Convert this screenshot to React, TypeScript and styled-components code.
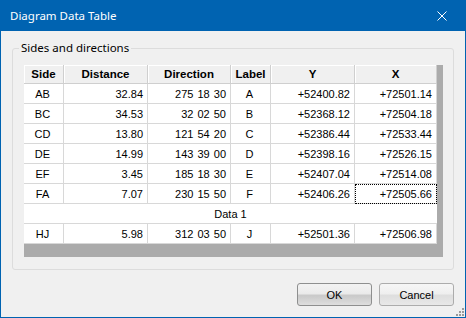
import styled, { createGlobalStyle } from "styled-components";

type Row = {
  side: string;
  distance: string;
  direction: string;
  label: string;
  y: string;
  x: string;
};

const rows: Row[] = [
  { side: "AB", distance: "32.84", direction: "275 18 30", label: "A", y: "+52400.82", x: "+72501.14" },
  { side: "BC", distance: "34.53", direction: "32 02 50", label: "B", y: "+52368.12", x: "+72504.18" },
  { side: "CD", distance: "13.80", direction: "121 54 20", label: "C", y: "+52386.44", x: "+72533.44" },
  { side: "DE", distance: "14.99", direction: "143 39 00", label: "D", y: "+52398.16", x: "+72526.15" },
  { side: "EF", distance: "3.45", direction: "185 18 30", label: "E", y: "+52407.04", x: "+72514.08" },
  { side: "FA", distance: "7.07", direction: "230 15 50", label: "F", y: "+52406.26", x: "+72505.66" },
];

const lastRow: Row = {
  side: "HJ",
  distance: "5.98",
  direction: "312 03 50",
  label: "J",
  y: "+52501.36",
  x: "+72506.98",
};

const headers = ["Side", "Distance", "Direction", "Label", "Y", "X"];

const DataRow = ({ row, focusX }: { row: Row; focusX?: boolean }) => (
  <>
    <Cell $align="center">{row.side}</Cell>
    <Cell $align="right">{row.distance}</Cell>
    <Cell $align="right" $spaced>{row.direction}</Cell>
    <Cell $align="center">{row.label}</Cell>
    <Cell $align="right">{row.y}</Cell>
    <Cell $align="right" $focused={focusX}>{row.x}</Cell>
  </>
);

const App = () => {
  return (
    <>
      <GlobalStyle />
      <Window>
        <TitleBar>
          <Title>Diagram Data Table</Title>
          <CloseButton type="button" aria-label="Close">
            <svg width="10" height="10" viewBox="0 0 10 10">
              <path d="M0.5 0.5 L9.5 9.5 M9.5 0.5 L0.5 9.5" stroke="#fff" strokeWidth="1" fill="none" />
            </svg>
          </CloseButton>
        </TitleBar>
        <Body>
          <Group>
            <Legend>Sides and directions</Legend>
            <Grid>
              {headers.map((h) => (
                <HeaderCell key={h}>{h}</HeaderCell>
              ))}
              {rows.map((r, i) => (
                <DataRow key={r.side} row={r} focusX={i === rows.length - 1} />
              ))}
              <SpanCell>Data 1</SpanCell>
              <DataRow row={lastRow} />
            </Grid>
          </Group>
          <ButtonBar>
            <DialogButton type="button" $primary>
              OK
            </DialogButton>
            <DialogButton type="button">Cancel</DialogButton>
          </ButtonBar>
        </Body>
        <SizeGrip width="10" height="10" viewBox="0 0 10 10">
          <rect x="8" y="2" width="2" height="2" fill="#9a9a9a" />
          <rect x="5" y="5" width="2" height="2" fill="#9a9a9a" />
          <rect x="8" y="5" width="2" height="2" fill="#9a9a9a" />
          <rect x="2" y="8" width="2" height="2" fill="#9a9a9a" />
          <rect x="5" y="8" width="2" height="2" fill="#9a9a9a" />
          <rect x="8" y="8" width="2" height="2" fill="#9a9a9a" />
        </SizeGrip>
      </Window>
    </>
  );
};

const GlobalStyle = createGlobalStyle`
  html, body {
    margin: 0;
    padding: 0;
    background: #ffffff;
  }
  * {
    box-sizing: border-box;
  }
`;

const Window = styled.div`
  position: relative;
  width: 466px;
  height: 318px;
  display: flex;
  flex-direction: column;
  background: #f0f0f0;
  border: 1px solid #0063b1;
  border-top: none;
  font-family: "Liberation Sans", Arial, sans-serif;
  font-size: 11px;
  color: #000;
`;

const TitleBar = styled.div`
  height: 31px;
  flex: none;
  display: flex;
  align-items: center;
  justify-content: space-between;
  background: #0063b1;
  padding-left: 9px;
`;

const Title = styled.span`
  font-family: "Segoe UI", "Noto Sans", sans-serif;
  font-size: 11.5px;
  color: #ffffff;
`;

const CloseButton = styled.button`
  width: 46px;
  height: 31px;
  border: none;
  background: none;
  padding: 0;
  display: flex;
  align-items: center;
  justify-content: center;
`;

const Body = styled.div`
  padding: 9px 11px 0 11px;
  display: flex;
  flex-direction: column;
`;

const Group = styled.fieldset`
  margin: 0;
  padding: 9px 10px 12px 11px;
  border: 1px solid #dcdcdc;
  border-radius: 3px;
  min-width: 0;
`;

const Legend = styled.legend`
  margin-left: -5px;
  padding: 0 2px;
  font-family: "Segoe UI", "Noto Sans", sans-serif;
  font-size: 11.5px;
  line-height: 16px;
  color: #000;
`;

const Grid = styled.div`
  display: grid;
  grid-template-columns: 40px 84px 83px 40px 84px 82px;
  grid-auto-rows: 20px;
  grid-template-rows: 19px;
  background: #ababab;
  padding: 0 6px 13px 0;
`;

const HeaderCell = styled.div`
  display: flex;
  align-items: center;
  justify-content: center;
  background: #f0f0f0;
  border-right: 1px solid #cfcfcf;
  border-bottom: 1px solid #cfcfcf;
  box-shadow: inset 1px 1px 0 #ffffff;
  font-weight: bold;
  font-size: 11.5px;
`;

const Cell = styled.div<{ $align: "center" | "right"; $spaced?: boolean; $focused?: boolean }>`
  display: flex;
  align-items: center;
  justify-content: ${(p) => (p.$align === "center" ? "center" : "flex-end")};
  padding: 0 4px 0 2px;
  background: #ffffff;
  border-right: 1px solid #d8d8d8;
  border-bottom: 1px solid #d8d8d8;
  white-space: nowrap;
  word-spacing: ${(p) => (p.$spaced ? "1px" : "0")};
  outline: ${(p) => (p.$focused ? "1px dotted #000" : "none")};
  outline-offset: -1px;
`;

const SpanCell = styled.div`
  grid-column: 1 / -1;
  display: flex;
  align-items: center;
  justify-content: center;
  background: #ffffff;
  border-bottom: 1px solid #d8d8d8;
`;

const ButtonBar = styled.div`
  display: flex;
  justify-content: flex-end;
  gap: 7px;
  margin-top: 13px;
`;

const DialogButton = styled.button<{ $primary?: boolean }>`
  width: 75px;
  height: 23px;
  padding: 0;
  border: 1px solid ${(p) => (p.$primary ? "#8e8f8f" : "#acacac")};
  border-radius: 3px;
  background: ${(p) =>
    p.$primary
      ? "linear-gradient(#f2f2f2 0%, #ebebeb 45%, #c9c9c9 55%, #dedede 100%)"
      : "linear-gradient(#f6f6f6 0%, #efefef 45%, #dedede 55%, #e8e8e8 100%)"};
  font-family: "Liberation Sans", Arial, sans-serif;
  font-size: 11px;
  color: #000;
`;

const SizeGrip = styled.svg`
  position: absolute;
  right: 1px;
  bottom: 1px;
`;

export default App;
